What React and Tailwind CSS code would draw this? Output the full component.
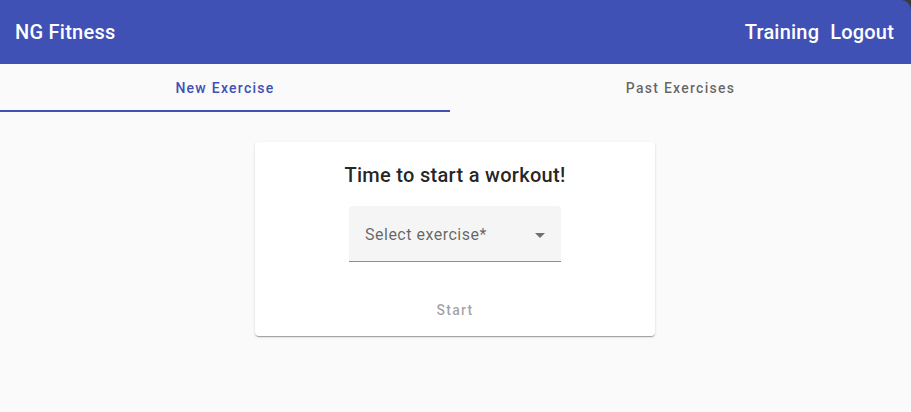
export default function App() {
  return (
    <div className="min-h-[412px] bg-[#fafafa] font-['Roboto',sans-serif]">
      <div className="bg-[#3a3a3a]">
        <header className="h-16 bg-[#3f51b5] rounded-tr-[10px] flex items-center justify-between pl-[15px] pr-[17px] text-white">
          <span className="text-[20px] font-medium tracking-[0.0125em]">NG Fitness</span>
          <nav className="flex items-center gap-[11px] text-[20px] font-medium tracking-[0.01em]">
            <span>Training</span>
            <span>Logout</span>
          </nav>
        </header>
      </div>

      <div className="flex h-12">
        <div className="w-[450px] relative flex items-center justify-center text-[14px] font-medium tracking-[0.09em] text-[#3f51b5]">
          New Exercise
          <div className="absolute left-0 right-0 bottom-0 h-[2px] bg-[#3f51b5]" />
        </div>
        <div className="flex-1 flex items-center justify-center text-[14px] font-medium tracking-[0.09em] text-black/60">
          Past Exercises
        </div>
      </div>

      <div className="flex justify-center pt-[30px] pr-px">
        <div className="w-[400px] h-[194px] bg-white rounded-[4px] shadow-[0_2px_1px_-1px_rgba(0,0,0,0.2),0_1px_1px_0_rgba(0,0,0,0.14),0_1px_3px_0_rgba(0,0,0,0.12)] flex flex-col items-center pt-[17px]">
          <h1 className="text-[20px] font-medium text-black/[0.87] leading-[32px] tracking-[0.015em]">Time to start a workout!</h1>
          <div className="mt-[15px] w-[212px] h-[56px] bg-[#f5f5f5] rounded-t-[4px] border-b border-black/[0.42] flex items-center justify-between pl-4 pr-[16px] pt-[3px]">
            <span className="text-[16px] text-black/60 tracking-[0.03125em]">Select exercise*</span>
            <svg width="10" height="5" viewBox="0 0 10 5" className="text-black/[0.54]">
              <path d="M0 0 L5 5 L10 0 Z" fill="currentColor" />
            </svg>
          </div>
          <button className="mt-[30px] h-9 px-4 text-[14px] font-medium tracking-[0.09em] text-black/[0.38]">Start</button>
        </div>
      </div>
    </div>
  );
}
